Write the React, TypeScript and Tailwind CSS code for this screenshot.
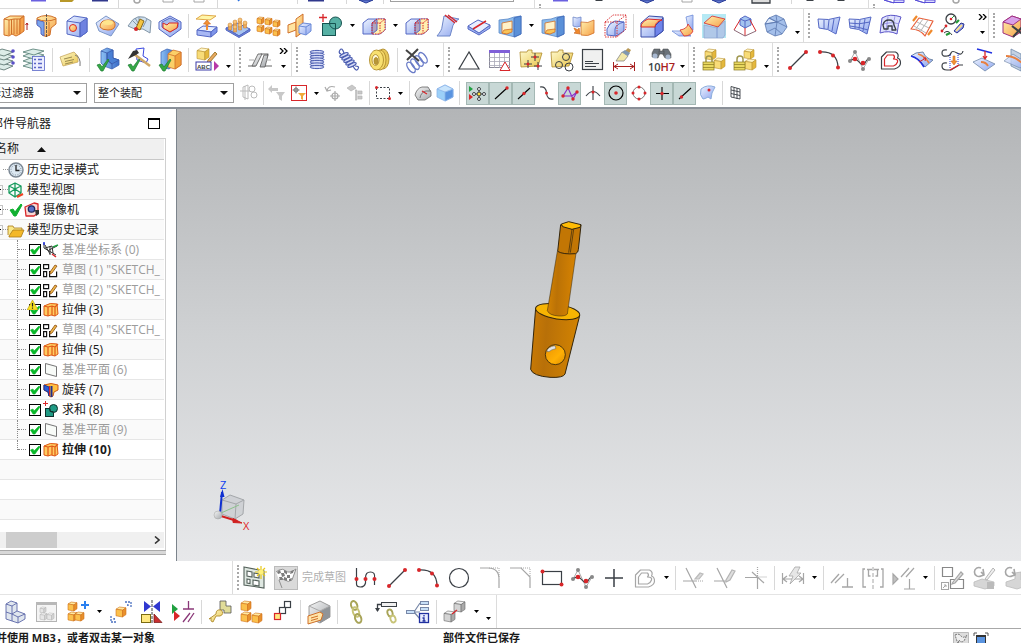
import type { ReactNode } from "react";

// ---- 图形小零件 ----

const BL = "#5468c4";
const OR = "#d0702a";
const GD = "#b08c2c";
const DK = "#3a3f45";
const GR = "#a6a6a6";
const RD = "#d8262a";

function Cube({ x, y, s, tone = "y" }: { x: number; y: number; s: number; tone?: "y" | "o" | "b" | "g" | "w" }) {
  const [top, front, side, line] = {
    y: ["#fff6c8", "#f8dc78", "#e4b83c", "#b8902c"],
    o: ["#ffe9a0", "#fbc04c", "#e8902c", "#d07018"],
    b: ["#e3ecff", "#9db8f2", "#6d86d8", BL],
    g: ["#f2f2f2", "#d4d4d4", "#aaaaaa", "#666666"],
    w: ["#fafafa", "#e6e6e6", "#d4d4d4", "#b8b8b8"],
  }[tone];
  const p = (a: number, b: number) => `${x + a * s},${y + b * s}`;
  return (
    <g stroke={line} strokeWidth={0.6} strokeLinejoin="round">
      <polygon fill={top} points={[p(0, 0.22), p(0.35, 0), p(1, 0.08), p(0.65, 0.32)].join(" ")} />
      <polygon fill={front} points={[p(0, 0.22), p(0.65, 0.32), p(0.65, 1), p(0, 0.88)].join(" ")} />
      <polygon fill={side} points={[p(0.65, 0.32), p(1, 0.08), p(1, 0.76), p(0.65, 1)].join(" ")} />
    </g>
  );
}

function Dots({ at, r = 2, c = RD }: { at: [number, number][]; r?: number; c?: string }) {
  return (
    <g fill={c} stroke="none">
      {at.map(([x, y]) => (
        <circle key={`${x},${y}`} cx={x} cy={y} r={r} />
      ))}
    </g>
  );
}

function Defs() {
  return (
    <svg width="0" height="0" className="absolute" aria-hidden="true">
      <defs>
        <linearGradient id="gb" x1="0" y1="0" x2="1" y2="1">
          <stop offset="0" stopColor="#eef4ff" />
          <stop offset="1" stopColor="#8ca4ee" />
        </linearGradient>
        <linearGradient id="gd" x1="0" y1="0" x2="1" y2="0">
          <stop offset="0" stopColor="#8cc0f4" />
          <stop offset="1" stopColor="#3a6cc8" />
        </linearGradient>
        <linearGradient id="go" x1="0" y1="0" x2="1" y2="1">
          <stop offset="0" stopColor="#fff2b0" />
          <stop offset="1" stopColor="#f6a048" />
        </linearGradient>
        <linearGradient id="gy" x1="0" y1="0" x2="1" y2="1">
          <stop offset="0" stopColor="#fffbd0" />
          <stop offset="1" stopColor="#e8c44c" />
        </linearGradient>
        <linearGradient id="gg" x1="0" y1="0" x2="1" y2="1">
          <stop offset="0" stopColor="#f6f6f6" />
          <stop offset="1" stopColor="#a4a8ac" />
        </linearGradient>
        <linearGradient id="body" x1="0" y1="0" x2="1" y2="0.1">
          <stop offset="0" stopColor="#cc7c04" />
          <stop offset="0.35" stopColor="#b87008" />
          <stop offset="1" stopColor="#d28302" />
        </linearGradient>
        <linearGradient id="shaft" x1="0" y1="0" x2="1" y2="0.1">
          <stop offset="0" stopColor="#d98702" />
          <stop offset="0.4" stopColor="#bb7206" />
          <stop offset="1" stopColor="#d68302" />
        </linearGradient>
        <linearGradient id="hole" x1="0" y1="0" x2="1" y2="1">
          <stop offset="0" stopColor="#e99204" />
          <stop offset="0.6" stopColor="#ffb005" />
          <stop offset="1" stopColor="#e08d00" />
        </linearGradient>
      </defs>
    </svg>
  );
}

const greenCheck = <path d="M1 17l3-1 2 3 6-8 1 1-6 11H5z" fill="#35a845" stroke="#1c7d33" strokeWidth=".7" />;

const lockBody = (
  <g stroke="#8a7a20" strokeWidth=".7">
    <path d="M4 14v-3a3 3 0 016 0v3" fill="none" stroke="#a09850" strokeWidth="1.500" />
    <rect x="1" y="14" width="11" height="8" fill="#e8d860" />
    <path d="M1 16.500h11M1 19.500h11" />
  </g>
);

// 24x24 大图标
const ICONS: Record<string, ReactNode> = {
  extrude: (
    <g stroke={OR} strokeLinejoin="round">
      <path d="M1 5l6-3h14l-4 3v15l-4 2-4-2-3 2-5-1z" fill="url(#go)" />
      <path d="M17 5l4-3v15l-4 3z" fill="#f6a048" />
      <path d="M1 5l5 1 5-1 6 0M6 6v15M11 5v15M8.500 6v14M14 5v15" fill="none" />
      <path d="M24 9v7M22.500 11l1.500-2 1 2" stroke="#b02020" fill="none" />
    </g>
  ),
  revolve: (
    <g strokeLinejoin="round">
      <path d="M3 4q9-5 19 0l0 6-5 4-1 7q-4 3-8 0l-1-7-4-4z" fill="url(#go)" stroke={OR} />
      <path d="M3 6l7 2v14l-3-2v-6l-4-3z" fill="#7aa4ec" stroke={BL} />
      <path d="M3 5q9 4 19 0M15 8v14" fill="none" stroke={OR} />
      <path d="M12.500 0v24" stroke={DK} strokeWidth=".8" strokeDasharray="3 1" />
    </g>
  ),
  hole: (
    <g stroke={BL} strokeLinejoin="round">
      <path d="M2 7l7-5 13 2v14l-7 5-13-3z" fill="url(#gb)" />
      <path d="M15 9l7-5v14l-7 5z" fill="#6f82e0" />
      <path d="M2 7l13 2v14" fill="none" />
      <circle cx="8" cy="14" r="3.500" fill="url(#go)" stroke={RD} />
    </g>
  ),
  emboss: (
    <g strokeLinejoin="round">
      <path d="M0 9L10 2l13 8-8 12L3 17z" fill="url(#gb)" stroke="#7d98c8" />
      <path d="M4 13q0-7 8-7t7 6q-1 4-7 4t-8-3z" fill="url(#go)" stroke={OR} />
      <ellipse cx="12" cy="8.500" rx="5" ry="2.500" fill="#ffe58c" />
    </g>
  ),
  tape: (
    <g strokeLinejoin="round">
      <path d="M1 12Q10-4 24 7l-1 12-7-4-3 0-3 1-9-4z" fill="#d0e0ee" stroke="#8396a8" />
      <path d="M5 6l6 6M12 3v8M20 5l-4 8M8 4l5 8" stroke="#8396a8" fill="none" />
      <path d="M9 14l4-9 4 2-4 9z" fill="#f5c542" stroke="#8a6a18" />
      <circle cx="9" cy="15" r="2" fill={RD} />
    </g>
  ),
  pocket: (
    <g strokeLinejoin="round">
      <path d="M1 8l11-6 11 6v7l-11 8L1 15z" fill="url(#gb)" stroke={BL} />
      <path d="M4 8l8-4 8 4v5l-8 5-8-5z" fill="#a8bcec" stroke={BL} />
      <path d="M5 9l4 2 2-2 9 0-1 5-7 4-7-4z" fill="url(#go)" stroke={RD} />
    </g>
  ),
  offsetFace: (
    <g strokeLinejoin="round">
      <path d="M1 5l6-4 14 1-6 4z" fill="#fff6a8" stroke="#e0a848" />
      <path d="M11 16V10H8.500l3.500-4 3.500 4H13v6" fill="#f39030" stroke={OR} strokeWidth=".7" />
      <path d="M2 16l6-4 14 1-6 5z" fill="#e6eeff" stroke={BL} />
      <path d="M2 16l14 2v5L2 21z" fill="#a8b8f4" stroke={BL} />
      <path d="M16 18l6-5v5l-6 5z" fill="#7f95ea" stroke={BL} />
      <path d="M12 16v-4" stroke="#f39030" strokeWidth="2" />
    </g>
  ),
  pattern: (
    <g strokeLinejoin="round">
      <path d="M0 14l11-5 13 6-11 7z" fill="#a8c4f0" stroke={BL} />
      <path d="M0 14v2l13 7.500 11-6.500v-2l-11 7z" fill="#6d86d8" stroke={BL} />
      {[[4, 11], [9, 8], [14, 6], [9, 13], [14, 11], [19, 9]].map(([x, y]) => (
        <g key={x * 20 + y} stroke="#c07a2c" strokeWidth=".5" fill="#f2ae5c">
          <rect x={x - 1.5} y={y} width="3" height="5" />
          <circle cx={x} cy={y} r="2" fill="#f8c478" />
        </g>
      ))}
    </g>
  ),
  patternGeom: (
    <g>
      <Cube x={0} y={3} s={7} tone="o" />
      <Cube x={8} y={4} s={7} tone="o" />
      <Cube x={16} y={6} s={7} tone="o" />
      <Cube x={0} y={11} s={7} tone="o" />
      <Cube x={8} y={13} s={7} tone="o" />
      <Cube x={16} y={15} s={7} tone="o" />
    </g>
  ),
  mirror: (
    <g strokeLinejoin="round">
      <path d="M0 11l8-3v8l-8 3z" fill="#ffe4a0" stroke={OR} />
      <path d="M8 5l7-5v18l-7 5z" fill="url(#go)" stroke={OR} />
      <path d="M11 12l4-3 8 1v7l-5 4-7-2z" fill="url(#gb)" stroke="#6d8cd8" />
      <path d="M11 12l7 1 5-3M18 13v8" fill="none" stroke="#6d8cd8" />
    </g>
  ),
  unite: (
    <g stroke="#15524f">
      <rect x="3.500" y="9.500" width="13" height="12" fill="#56b0a4" />
      <circle cx="16.500" cy="9" r="6" fill="#56b0a4" />
      <path d="M10 9.500h6.500V15" fill="none" />
      <path d="M0 3.500h8M4 0v8" stroke={RD} strokeWidth="1.300" />
    </g>
  ),
  trim: (
    <g strokeLinejoin="round">
      <path d="M1 9l5-4h17v11l-5 4H1z" fill="url(#gb)" stroke={BL} />
      <path d="M10 9l5-4h8v11l-5 4h-8z" fill="#fff0b0" stroke="none" />
      <path d="M10 9l5-4v11l-5 4z" fill="#b0a4c0" stroke={BL} />
      <path d="M10 9h8v11h-8zM10 9l5-4h8l-5 4M23 5v11l-5 4" fill="none" stroke={RD} strokeDasharray="1.500 1" />
    </g>
  ),
  trimSheet: (
    <g strokeLinejoin="round">
      <path d="M8 2l15 3q-6 3-7 10l-2 7H1q5-6 5-9z" fill="url(#gb)" stroke="#6d86c8" />
      <path d="M9 1l10 8M12 1l9 7" stroke={RD} strokeWidth="1.300" />
    </g>
  ),
  divide: (
    <g strokeLinejoin="round">
      <path d="M1 12v3l11 6 11-7v-3l-11 8z" fill="#9cb0f0" stroke={BL} />
      <path d="M1 12l10-6 12 5-11 8z" fill="#e8eeff" stroke={BL} />
      <path d="M6 15l13-8" stroke={RD} strokeWidth="1.500" />
    </g>
  ),
  shell: (
    <g strokeLinejoin="round" strokeWidth=".8">
      <path d="M1 6l9-1 6-2 7-1v18l-6 3-16-4z" fill="#8cbcec" stroke="#5a88c8" />
      <path d="M4 9l10-2v9l-5 4-5-1z" fill="#fff2c8" stroke={OR} />
      <path d="M6 16l8-1v3l-5 2-5-1z" fill="#f8c458" stroke={OR} />
      <path d="M16 4l7-2v18l-7 3z" fill="#5a90d8" stroke="#4068b8" />
    </g>
  ),
  replace: (
    <g strokeLinejoin="round" strokeWidth=".8">
      <path d="M1 3q4 2 8 0v9q-4 2-8 0z" fill="url(#gb)" stroke="#6d86c8" />
      <path d="M9 8q7 2 13-2v13q-6 4-13 2z" fill="url(#go)" stroke={OR} />
      <path d="M2 14l4 2 1-2 1 6-6-1 2-1z" fill="#f08a2c" stroke={OR} />
    </g>
  ),
  offsetBody: (
    <g strokeLinejoin="round">
      <path d="M4 21v-6q2-6 8-8l9 1v9l-8 5z" fill="url(#gb)" stroke={BL} />
      <path d="M12 22v-7q1-5 9-7" fill="none" stroke={BL} />
      <path d="M2 8h12v15H2zM2 8l8-7h13v14l-9 8M14 8l9-7" fill="none" stroke={RD} strokeWidth=".9" strokeDasharray="1.500 1" />
    </g>
  ),
  blend: (
    <g strokeLinejoin="round">
      <path d="M1 9l8-7 14 1v14l-8 6H1z" fill="url(#gb)" stroke="#3a4da8" />
      <path d="M15 12l8-8v13l-8 6z" fill="#6f84ea" stroke="#3a4da8" />
      <path d="M1 13q0-5 7-8l14 1q-7 2-7 7z" fill="url(#go)" stroke={RD} />
    </g>
  ),
  faceBlend: (
    <g strokeLinejoin="round" strokeWidth=".8">
      <path d="M15 3l7-2v15l-5-3z" fill="url(#gb)" stroke="#6d8cd8" />
      <path d="M1 17h12l7 5H8z" fill="url(#gb)" stroke="#6d8cd8" />
      <path d="M9 16q7-1 8-6l5 7q-2 5-9 5z" fill="url(#go)" stroke={RD} />
    </g>
  ),
  chamfer: (
    <g strokeLinejoin="round">
      <rect x="0" y="0" width="24" height="24" fill="#b5e9f4" />
      <path d="M2 11l13 3 8-7v14l-2 3H2z" fill="#b0c8e8" stroke="#90a8d0" strokeWidth=".8" />
      <path d="M2 9l8-7 13 3-7 8z" fill="url(#go)" stroke={RD} strokeWidth=".8" />
      <path d="M15 13v11" stroke="#7f98d0" />
    </g>
  ),
  draft: (
    <g strokeLinejoin="round">
      <path d="M7 5l5-3 6 3v6l-6 3-5-3z" fill="#a4c4f0" stroke={BL} />
      <path d="M7 5l5 2 6-2M12 7v7" stroke={BL} fill="none" />
      <path d="M1 16L7 6M23 17l-6-11M12 22V14" stroke={RD} />
      <path d="M1 16l11 6 11-5" fill="none" stroke="#8d6a78" />
    </g>
  ),
  facet: (
    <g stroke="#5c78b0" strokeWidth=".8" strokeLinejoin="round">
      <path d="M12 1l8 4 3 8-5 7-7 2-8-4-2-8 4-6z" fill="#a4bfea" />
      <path d="M5 4l8 4-12 2z" fill="#dce8fb" />
      <path d="M5 4l8 4 7-3M1 10l12-2 10 5M13 8l-2 14M3 18l8-4 7 6M12 1l1 7" fill="none" />
    </g>
  ),
  ruled: (
    <g stroke={BL} strokeLinejoin="round">
      <path d="M1 5q10 2 22-2l-4 17Q11 14 2 14z" fill="url(#gb)" />
      <path d="M7 6v9M12 6l-1 9M17 5l-2 12" fill="none" />
    </g>
  ),
  mesh: (
    <g stroke={BL} strokeLinejoin="round">
      <path d="M1 5q10 2 22-2l-4 17Q11 14 2 14z" fill="url(#gb)" />
      <path d="M7 6v9M12 6l-1 9M17 5l-2 12M1 9q10 2 21-1M2 12q9 1 18 4" fill="none" />
    </g>
  ),
  sweep: (
    <g strokeLinejoin="round">
      <path d="M3 4q8-5 19-1-3 6-4 17Q10 16 1 19z" fill="#dfe2fc" stroke="#5b55c8" />
      <path d="M9 3L7 17M16 2l-3 15M2 11q10-4 18-1" fill="none" stroke="#8a84e0" strokeWidth=".8" />
      <path d="M5 15l-1-4q1-5 6-5t5 5l2 5h-4v-4H9v3z" fill="none" stroke={DK} strokeWidth="1.300" />
    </g>
  ),
  swept: (
    <g fill="none" strokeLinejoin="round">
      <path d="M9 4l14 3-8 15Q10 15 1 15z" fill="#fff" stroke="#e8603a" strokeWidth="1.200" />
      <path d="M13 5L5 16M18 6l-8 12M7 8l12 6M4 12l12 7" stroke="#b5b5b5" />
      <path d="M3 7l4-5M18 21l4-5" stroke="#f08a2c" strokeWidth="2.200" />
    </g>
  ),
  curveTool: (
    <g fill="none">
      <circle cx="10" cy="5" r="5" stroke={DK} strokeWidth="1.300" />
      <path d="M10 5l3-3" stroke="#249a38" />
      <circle cx="10" cy="5" r="1.300" fill={RD} />
      <path d="M1 17l4-5M3 19q4-4 8 2" stroke={DK} />
      <Dots at={[[1, 17], [5, 12]]} r={1.400} />
      <path d="M5 21l4-2M15 9l3-3" stroke="#249a38" strokeWidth="2.200" />
      <path d="M13 17l7-8 3 1-1 4-6 5z" fill="#8f9cf0" stroke="#2a3490" />
      <path d="M15 17l6-6" stroke="#ffe08a" strokeWidth="1.800" />
    </g>
  ),
  deleteBody: (
    <g strokeLinejoin="round">
      <path d="M1 8l9-6 9 3v13l-8 5-10-4z" fill="url(#go)" stroke="#a03080" />
      <path d="M1 8l9-6 9 3-8 6z" fill="#d9a0e8" stroke="#a03080" />
      <path d="M10 12l13 10M22 11L11 23" stroke={DK} strokeWidth="2" />
    </g>
  ),

  // 第二行
  layers: (
    <g stroke="#4f6b66" strokeWidth=".8" fill="#dcece8">
      <path d="M2 19l9-4 11 3-9 4z" />
      <path d="M2 14l9-4 11 3-9 4z" />
      <path d="M2 9l9-4 11 3-9 4z" />
      <path d="M2 5l9-4 11 3-9 4z" />
      <Dots at={[[22, 3], [22, 9], [22, 15]]} r={1.800} c="#5a50c8" />
    </g>
  ),
  layerSet: (
    <g stroke="#4f7a70" strokeWidth=".8" fill="#dcece8">
      <path d="M1 18l10-4 11 3-10 4z" />
      <path d="M1 13l10-4 11 3-10 4z" />
      <path d="M1 8l10-4 11 3-10 4z" />
      <path d="M1 4l10-3 11 2-10 4z" />
      <rect x="10.500" y="8.500" width="12" height="14" fill="#eceeff" stroke="#5a66c8" />
      <path d="M12 11.500h2M12 15.500h2M12 19.500h2M16 11.500h4M16 15.500h4M16 19.500h4" stroke="#5a66c8" strokeWidth="1.500" />
    </g>
  ),
  tag: (
    <g strokeLinejoin="round">
      <path d="M1 9l14-5 4 4 0 6-15 4z" fill="url(#gy)" stroke="#c8a860" strokeWidth=".8" />
      <path d="M5 11l8-2M6 13.500l9-2M6 16l8-2" stroke="#9a8a50" fill="none" />
      <path d="M16 7q6 2 5 11" fill="none" stroke="#777" />
    </g>
  ),
  wave1: (
    <g strokeLinejoin="round" strokeWidth=".8">
      <path d="M5 3l6-3 6 2v8l6 2v5l-7 4-8-3-3-3z" fill="url(#gd)" stroke="#4068b8" />
      <path d="M11 5l6-3v8l6 2-7 4-5-4z" fill="#4a80d4" stroke="#3a58a8" />
      <path d="M5 3l6 2v7l5 4v5" fill="none" stroke="#3a58a8" />
      {greenCheck}
    </g>
  ),
  wave2: (
    <g strokeLinejoin="round">
      <path d="M9 1l8-1-1 8 5 3-2 4-9-3z" fill="#fff" stroke="#3a48e0" />
      <path d="M7 6l16 12" stroke="#d0a868" strokeWidth="2.500" />
      <path d="M1 11l5-8 4-1 2 3-5 3z" fill="#333" />
      {greenCheck}
    </g>
  ),
  wave3: (
    <g strokeLinejoin="round" strokeWidth=".8">
      <path d="M3 4l6-3 7 2v14l-5 4-8-2z" fill="url(#gd)" stroke="#4068b8" />
      <path d="M10 6l5-4 8 2v13l-6 4-7-2z" fill="#fbd068" stroke={OR} />
      <path d="M17 8l6-4v13l-6 4z" fill="#f0a03c" stroke={OR} />
      <path d="M10 6l7 2" fill="none" stroke={OR} />
      {greenCheck}
    </g>
  ),
  annotate: (
    <g>
      <Cube x={2} y={0} s={12} />
      <path d="M13 12l7-8 2 2-7 8-3 1z" fill="#e8a860" stroke="#8a6a18" strokeWidth=".8" />
      <rect x="1" y="14" width="15" height="8" fill="#fff" stroke="#3a3aa8" />
      <text x="2" y="21" fontSize="6" fontWeight="700" fontFamily="Liberation Sans, sans-serif" fill={DK}>ABC</text>
      <path d="M19 13l5 5-5 5z" fill="#b838a8" />
    </g>
  ),
  straighten: (
    <g strokeLinejoin="round">
      <path d="M0 18h7l6-12h7l-4 12h8" fill="none" stroke="#666" strokeWidth="1.200" />
      <path d="M4 18l6-12h4l-6 12zM12 19l4-12h4l-3 12z" fill="url(#gg)" stroke="#555" strokeWidth=".8" />
      <path d="M1 12h5M18 12h5" stroke="#aaa" fill="none" />
    </g>
  ),
  springV: (
    <g fill="none" stroke="#4a5cb0">
      {[4, 6.5, 9, 11.5, 14, 16.5, 19].map((y) => (
        <ellipse key={y} cx="12" cy={y} rx="7" ry="1.600" fill="#d4daf6" />
      ))}
    </g>
  ),
  springT: (
    <g fill="none" stroke="#4a5cb0" strokeWidth="1.200">
      <path d="M8 5Q6-1 4 2t1 4M17 18q3 6 5 3t-3-3" />
      {[[8, 6], [10, 8.5], [12, 11], [14, 13.5], [16, 16]].map(([x, y]) => (
        <ellipse key={x} cx={x} cy={y + 1} rx="4.500" ry="1.500" transform={`rotate(-25 ${x} ${y + 1})`} fill="#d4daf6" />
      ))}
    </g>
  ),
  springD: (
    <g stroke={GD} strokeWidth=".9">
      <ellipse cx="16" cy="11" rx="6" ry="10" fill="#e8c858" />
      <ellipse cx="13" cy="12" rx="6" ry="10" fill="#f4d868" />
      <ellipse cx="9.500" cy="12" rx="7" ry="10" fill="#f8e070" />
      <ellipse cx="8.500" cy="12" rx="3.500" ry="5.500" fill="#fff8d8" />
      <ellipse cx="9" cy="13" rx="2" ry="3.500" fill="#b89838" />
    </g>
  ),
  springX: (
    <g fill="none">
      {[7, 11, 15, 19].map((x) => (
        <ellipse key={x} cx={x} cy={25 - x * 0.8} rx="3" ry="6" stroke="#6a7cc8" strokeWidth="1.400" transform={`rotate(-35 ${x} ${25 - x * 0.8})`} />
      ))}
      <path d="M2 2l13 11M14 1L3 12" stroke="#444" strokeWidth="2" />
    </g>
  ),
  triangle: <path d="M12 4L2 21h20z" fill="none" stroke={DK} strokeWidth="1.200" />,
  sheet: (
    <g>
      <rect x="1.500" y="2.500" width="20" height="17" fill="#fff" stroke="#8a8a9a" />
      <path d="M1 9.500h21M1 13.500h21M1 17.500h21M6.500 5v15M11.500 5v15M16.500 5v15" stroke="#a8a8b8" strokeWidth=".8" />
      <rect x="1" y="2" width="21" height="3" fill="#8060d8" />
      <path d="M17 14l-5 8.500h10z" fill="#fff" stroke={RD} />
    </g>
  ),
  folderPts: (
    <g>
      <path d="M1 4h7l1-2h4v3h10l-4 13-17 1z" fill="url(#gy)" stroke={GD} strokeWidth=".8" />
      <path d="M12 9h8M16 5v8M5 16h8M9 12v8M15 18h8M19 14v8" stroke={DK} />
      <Dots at={[[16, 9], [9, 16], [19, 18]]} r={1.500} />
    </g>
  ),
  folderCirc: (
    <g>
      <path d="M1 4h7l1-2h4v3h10l-4 13-17 1z" fill="url(#gy)" stroke={GD} strokeWidth=".8" />
      <g fill="none" stroke={DK}>
        <circle cx="16" cy="9" r="3.500" />
        <circle cx="9" cy="17" r="3.500" />
        <circle cx="19" cy="19" r="4" />
      </g>
    </g>
  ),
  note: (
    <g stroke={DK}>
      <rect x="1.500" y="1.500" width="20" height="20" fill="#f0f0f0" strokeWidth="1.200" />
      <path d="M4 13.500h8M4 15.500h14M4 18.500h11" fill="none" />
    </g>
  ),
  paintDim: (
    <g>
      <path d="M16 0l3 2-3 5-4-3z" fill="#b89858" />
      <path d="M10 4l6 4-4 5-8 0z" fill="#f2e8a8" stroke="#888" strokeWidth=".8" />
      <path d="M10 4l3-2 5 3-2 3z" fill="#8098b0" />
      <path d="M1.500 14v9M22.500 14v9M2 18.500h20M6 16l-4 2.500L6 21M18 16l4 2.500-4 2.500" fill="none" stroke="#a82020" />
    </g>
  ),
  fit: (
    <g>
      <g fill="#6a727a" stroke="#444" strokeWidth=".5">
        <path d="M5 1h6v4l-2 5-6-1V5zM14 1h5l3 5v4h-6l-3-5z" />
        <rect x="10" y="3" width="5" height="3" />
      </g>
      <circle cx="6" cy="8" r="2.500" fill="#a8b8d0" />
      <circle cx="19" cy="9" r="2.500" fill="#a8b8d0" />
      <text x="-1" y="23" fontSize="11" fontFamily="Open Sans, sans-serif" fontWeight="600" fill={DK}>
        10<tspan fill="#a82020">H7</tspan>
      </text>
    </g>
  ),
  lock1: (
    <g>
      <Cube x={3} y={1} s={11} />
      <Cube x={12} y={10} s={11} />
      {lockBody}
    </g>
  ),
  lock2: (
    <g>
      <Cube x={11} y={1} s={10} />
      <Cube x={12} y={11} s={11} />
      {lockBody}
    </g>
  ),
  line: (
    <g>
      <path d="M4 20L20 4" stroke={DK} strokeWidth="1.200" />
      <Dots at={[[4, 20], [20, 4]]} />
    </g>
  ),
  arc: (
    <g fill="none">
      <path d="M3 4q18-1 18 16" stroke={DK} strokeWidth="1.200" />
      <Dots at={[[3, 4], [16, 7.5], [21, 19.5]]} />
    </g>
  ),
  spline: (
    <g fill="none">
      <path d="M2 13l5-9 8 17 6-10" stroke="#aaa" />
      <path d="M2 13q5-4 9 1t6 1 4-4" stroke={DK} strokeWidth="1.200" />
      <Dots at={[[2, 13], [7, 4], [15, 21], [21, 11]]} r={2} c="#888" />
      <Dots at={[[7, 11], [15, 15]]} r={2.300} />
    </g>
  ),
  offsetCurve: (
    <g fill="none" strokeLinejoin="round">
      <path d="M2.500 21V9l5-5h9q4 2 2 6 3 1 3 5t-6 6z" stroke={DK} strokeWidth="1.200" />
      <path d="M5.500 18v-7l3-4h6q2 2 0 4 5 0 4 3t-4 4z" stroke={RD} strokeWidth="1.200" />
    </g>
  ),
  curveFace: (
    <g strokeLinejoin="round">
      <path d="M1 8q4-4 12-4 3 7 10 8l-8 7Q9 10 1 8z" fill="url(#gb)" stroke="#7088a8" />
      <path d="M1 8q8 2 13 11" stroke="#2030e0" strokeWidth="1.600" fill="none" />
      <path d="M8 6q7 2 11 9" stroke="#e88040" strokeWidth="1.600" fill="none" />
      <path d="M9 14l7-4M13 10l3 0-1 3" stroke={RD} fill="none" />
    </g>
  ),
  bridge: (
    <g fill="none">
      <path d="M6 2q-5-1-5 3t5 3q3 0 4-3t6 0 6-2M6 15q-5-1-5 3t5 4h4l8-5h4" stroke={DK} strokeWidth="1.200" />
      <path d="M9 7v14M17 5v12" stroke="#2030e0" strokeDasharray="1 1" />
      <path d="M12 8h2v5h2l-3 4-3-4h2z" fill="#f39030" stroke={OR} strokeWidth=".6" />
      <path d="M9 22l9-5" stroke={RD} strokeWidth="1.300" />
    </g>
  ),
  project: (
    <g strokeLinejoin="round">
      <path d="M1 14l9-4 13 6-10 7z" fill="url(#gb)" stroke="#7088a8" strokeWidth=".8" />
      <path d="M9 14q5 0 7 4" stroke="#e88040" strokeWidth="1.800" fill="none" />
      <path d="M5 1l15 4" stroke="#2030e0" strokeWidth="1.400" />
      <path d="M13 3v8M11 8l2 3 2-3" stroke={RD} strokeWidth="1.300" fill="none" />
    </g>
  ),
  intersect: (
    <g strokeLinejoin="round" strokeWidth=".8">
      <path d="M8 1l10 5v17L8 18z" fill="#c4d2e4" stroke="#7088a8" />
      <path d="M1 13l9-7 14 9-7 5z" fill="url(#gb)" stroke="#7088a8" opacity=".8" />
      <path d="M3 8q9 0 17 8" stroke="#e88040" strokeWidth="1.800" fill="none" />
    </g>
  ),

  // 草图工具条
  sketch: (
    <g fill="none" stroke="#53605a" strokeWidth="1.100">
      <path d="M1 1l20 4v17L1 19z" fill="#dfe8e2" />
      <path d="M4 5l5 1v5l-5-1zM4 13l3 .5v4L4 17zM10 14l6 1v5l-6-1zM11 7l5 1v4l-5-1z" fill="#fff" />
      <path d="M18 0v13M12 6h12M14 2l8 8M22 2l-8 8" stroke="#e8c818" strokeWidth="1.200" />
      <circle cx="18" cy="6" r="2.500" fill="#fff27a" stroke="none" />
    </g>
  ),
  flag: (
    <g>
      <path d="M2 6l3-2q4-2 7 1t10-2l-4 11q-4 3-7 0t-6 0l3 8" fill="#fff" stroke="#909090" />
      <g fill="#7c7c7c">
        <path d="M3 6l3-2 1 3-3 1zM10 4l3 1.500 0 3-3-2zM17 5l3-1-1 3-3 1zM7 7l3 0 1 3-3 1zM13 9l3 0 0 3-3 0zM5 11l3 0 1 3-3 0zM10 11l3 1 0 3-3-1zM15 13l3-1-1 3-2 0z" />
      </g>
    </g>
  ),
  profile: (
    <g fill="none">
      <path d="M2.500 2v16q0 3 4 3t5-4v-5q0-6 5-6t4 6v7" stroke={DK} strokeWidth="1.200" />
      <Dots at={[[2.5, 13], [11.5, 13], [20.5, 13]]} />
    </g>
  ),
  circle: <circle cx="12" cy="12" r="9.500" fill="none" stroke={DK} strokeWidth="1.200" />,
  fillet: (
    <g fill="none" stroke={GR}>
      <path d="M2 2h8q11 0 11 11v9" strokeWidth="1.200" />
      <path d="M11 2h10v9" strokeDasharray="1 1" />
    </g>
  ),
  chamferLine: (
    <g fill="none" stroke={GR}>
      <path d="M1 2h11l9 9v11" strokeWidth="1.200" />
      <path d="M12 2h9v9" strokeDasharray="1 1" />
    </g>
  ),
  rect: (
    <g>
      <rect x="2.500" y="5.500" width="19" height="13" fill="none" stroke={DK} strokeWidth="1.200" />
      <Dots at={[[2.5, 5.5], [21.5, 18.5]]} />
    </g>
  ),
  plus: <path d="M12 3v18M3 12h18" stroke={DK} strokeWidth="1.500" />,
  offsetGray: (
    <g fill="none" strokeLinejoin="round" stroke={GR} strokeWidth="1.200">
      <path d="M2.500 21V9l5-5h9q4 2 2 6 3 1 3 5t-6 6z" />
      <path d="M5.500 18v-7l3-4h6q2 2 0 4 5 0 4 3t-4 4z" />
    </g>
  ),
  quickTrim: (
    <g fill="none" stroke={GR} strokeWidth="1.200">
      <path d="M1 15h13M4 2l10 20" />
      <path d="M14 15h8" strokeDasharray="1 1" />
      <path d="M13 13l5-6 3 1-4 5z" fill="#d8d8d8" stroke="#bbb" />
    </g>
  ),
  quickExtend: (
    <g fill="none" stroke={GR} strokeWidth="1.200">
      <path d="M1 15h12M4 2l10 20" />
      <path d="M13 14l6-10 3 1-5 9-4 2z" fill="#dedede" stroke="#b4b4b4" />
    </g>
  ),
  corner: (
    <g fill="none" stroke={GR} strokeWidth="1.200">
      <path d="M1 11.500h12.500V23M8 6l12 11" />
      <path d="M13.500 1v10h9" strokeDasharray="1 1" />
    </g>
  ),
  autoDim: (
    <g fill="none" stroke={GR} strokeWidth="1.200">
      <path d="M1.500 7v11M22.500 7v11M2 13h20M6 10l-4 3 4 3M18 10l4 3-4 3" />
      <path d="M14 1h5l-3 6h4L9 18l3-8H8z" fill="#e6e6e6" strokeWidth=".8" />
    </g>
  ),
  constraint: (
    <g stroke={GR} strokeWidth="1.300">
      <path d="M1 17L9 8M5 17l9-9M17.500 12v9M12 21h11" />
    </g>
  ),
  symmetric: (
    <g fill="none" stroke={GR} strokeWidth="1.300">
      <path d="M4 3H2v18h3M20 3h2v18h-3M7.500 3v7h2M16.500 3v7h-2" />
      <path d="M12 1v22" strokeDasharray="4 2" strokeWidth="1" />
      <path d="M6 3.500h5M18 3.500h-5" />
    </g>
  ),
  showCons: (
    <g stroke={GR} strokeWidth="1.200">
      <path d="M1 8l5 5-5 5z" fill="#c0c0c0" />
      <path d="M9 11l8-9M14 11l8-9M17.500 13v10M12 23h11" />
    </g>
  ),
  orient: (
    <g fill="none" stroke="#888" strokeWidth="1.200">
      <path d="M1.500 1.500h10v9h-10zM9.500 13.500h13v9h-13z" />
      <rect x="0.500" y="16.500" width="7" height="7" strokeWidth="1" stroke={GR} />
      <path d="M2 22l3-3M3 19h2v2" strokeWidth="1" stroke={GR} />
      <path d="M12 16l8-10 2 2-8 9-3 1z" fill="#ddd" stroke={GR} />
    </g>
  ),
  reattach: (
    <g strokeLinejoin="round" strokeWidth=".8">
      <path d="M2 16l8-3 12 3v4l-9 3-11-3z" fill="#d6d6d6" stroke="#bbb" />
      <path d="M9 2a4.500 4.500 0 100 8l3-1M9 6l3 3-1-6" fill="none" stroke={GR} strokeWidth="1.600" />
      <path d="M13 13l8-11 2 2-8 10z" fill="#eee" stroke={GR} />
      <rect x="15" y="16" width="7" height="7" fill="#bbb" />
    </g>
  ),
  update: (
    <g strokeLinejoin="round" strokeWidth=".8">
      <path d="M3 16l9-3V7l6-1v8l5 2v4l-9 3-11-3z" fill="#d6d6d6" stroke="#bbb" />
      <path d="M9 2a4.500 4.500 0 100 8l3-1M9 6l3 3-1-6" fill="none" stroke={GR} strokeWidth="1.600" />
    </g>
  ),

  // 装配工具条
  asmBlue: (
    <g strokeLinejoin="round" fill="#e0e6ee" stroke="#5c68a8" strokeWidth=".9">
      <path d="M2 4l5-3 6 2v8l8 3v5l-7 4-12-4z" />
      <path d="M2 4l6 2 5-3M8 6v15M2 12l6 2 5-3M8 14l6 3 7-3M14 17v6" fill="none" />
    </g>
  ),
  asmFrame: (
    <g>
      <rect x="1.500" y="2.500" width="20" height="19" fill="#f4f4f4" stroke="#b4b4b4" />
      <rect x="1" y="2" width="21" height="3" fill="#b8b8b8" />
      <Cube x={5} y={7} s={6} tone="w" />
      <Cube x={5} y={13} s={7} tone="w" />
      <Cube x={12} y={13} s={7} tone="w" />
    </g>
  ),
  addPart: (
    <g>
      <Cube x={2} y={2} s={9} tone="o" />
      <Cube x={2} y={12} s={9} tone="o" />
      <Cube x={9} y={12} s={9} tone="o" />
      <path d="M19 1v8M15 5h8" stroke="#2a80f0" strokeWidth="2" />
    </g>
  ),
  movePart: (
    <g fill="none">
      <Cube x={7} y={7} s={10} tone="o" />
      <path d="M16 2h6v6M18 5h1v2M2 16v6h6M5 18v1h2" stroke="#4a70c0" strokeDasharray="2 1" strokeWidth="1.300" />
    </g>
  ),
  mirrorAsm: (
    <g>
      <path d="M4 1l7 5.500L4 12zM20 1l-7 5.500 7 5.500z" fill="#3038d0" />
      <path d="M12 0v24" stroke={DK} strokeDasharray="3 1" />
      <rect x="1.500" y="14.500" width="9" height="8" fill="#ffe880" stroke="#7a6a10" />
      <path d="M14 14l8 8.500h-8z" fill="#c83030" stroke="#701010" strokeWidth=".7" />
    </g>
  ),
  asmCons: (
    <g>
      <path d="M1 4l6 5-6 5z" fill="#20a040" />
      <path d="M3 11l6 5-6 5z" fill={RD} />
      <path d="M17.500 1v8M12 9h11M12 22l7-9M17 22l6-9" stroke="#8a3878" strokeWidth="1.300" />
    </g>
  ),
  wrench: (
    <g strokeLinejoin="round" stroke={GD} strokeWidth=".9">
      <path d="M12 1h6v5h5v7h-7v-3h-4z" fill="#e0dc98" stroke="#555" strokeWidth=".8" />
      <path d="M1 19l7-5q0-5 5-4 4 4-1 6l-4 0-3 6-2-1 0-3z" fill="url(#gy)" />
    </g>
  ),
  pattern3: (
    <g>
      <Cube x={2} y={1} s={10} tone="o" />
      <Cube x={2} y={12} s={10} tone="o" />
      <Cube x={13} y={13} s={10} tone="o" />
    </g>
  ),
  steps: (
    <g stroke={DK} strokeWidth="1.200">
      <rect x="14.500" y="1.500" width="6" height="6" fill="#fff" />
      <rect x="9.500" y="7.500" width="6" height="6" fill="#fff" />
      <rect x="4.500" y="13.500" width="6" height="6" fill="#ffe880" stroke={RD} />
    </g>
  ),
  box3d: (
    <g strokeLinejoin="round">
      <path d="M2 6l11-5 10 5v11l-10 6-11-5z" fill="url(#gg)" stroke="#888" strokeWidth=".8" />
      <path d="M13 11l10-5v11l-10 6z" fill="#909498" />
      <path d="M2 6l11 5 10-5" fill="none" stroke="#aaa" />
      <path d="M1 16l12-4 3 2-2 6-13 4z" fill="#ffe4a8" stroke={OR} />
      <path d="M4 18l7-2M4 20.500l7-2" stroke={OR} />
    </g>
  ),
  chain: (
    <g fill="none" strokeWidth="2" stroke="#a8a458">
      <ellipse cx="10" cy="5.500" rx="3" ry="4.500" transform="rotate(-20 10 5)" />
      <ellipse cx="12" cy="12" rx="3" ry="5" transform="rotate(-20 12 12)" stroke="#c8c478" />
      <ellipse cx="14" cy="18.500" rx="3" ry="4.500" transform="rotate(-20 14 18)" />
    </g>
  ),
  chain2: (
    <g fill="none">
      <path d="M2.500 11V4.500h4" stroke={DK} strokeWidth="1.300" />
      <rect x="6.500" y="2.500" width="15" height="4" fill="#f0f0f0" stroke={DK} />
      <path d="M0 8h5l-2.500 4z" fill={DK} />
      <ellipse cx="15" cy="13" rx="2.500" ry="3.500" transform="rotate(-20 15 13)" stroke="#a8a458" strokeWidth="1.800" />
      <ellipse cx="18" cy="19" rx="2.500" ry="3.500" transform="rotate(-20 18 19)" stroke="#c8c478" strokeWidth="1.800" />
    </g>
  ),
  infoTree: (
    <g fill="none">
      <path d="M8 12l6-9M8 12h6M8 12l6 7" stroke="#7888a8" strokeWidth="1.200" />
      <rect x="0.500" y="10.500" width="8" height="3" fill="#c8e0f8" stroke="#7888a8" />
      <rect x="14.500" y="1.500" width="8" height="3" fill="#c8e0f8" stroke="#7888a8" />
      <rect x="14.500" y="7.500" width="8" height="3" fill="#c8e0f8" stroke="#7888a8" />
      <rect x="13.500" y="13.500" width="9" height="9" fill="#e8ecff" stroke="#2030a0" strokeWidth="1.300" />
      <path d="M18 15v1.500M16.500 18H18v3M16.500 21h3" stroke="#2030a0" strokeWidth="1.300" />
    </g>
  ),
  clearance: (
    <g>
      <Cube x={11} y={1} s={11} tone="g" />
      <Cube x={1} y={11} s={11} tone="g" />
      <path d="M9 14l5-4" stroke={RD} strokeWidth="1.300" />
    </g>
  ),

  // 被裁切的第一行
  c_purple: <path d="M5 0h15v1.500H5z" fill="#6a60e0" />,
  c_olive: <path d="M3 0h14l-2 2H3z" fill="#b89828" />,
  c_navy: <path d="M4 0h16v1.500H4z" fill="#30388c" />,
  c_ring: <path d="M9 0a3 3 0 006 0" fill="none" stroke={GR} strokeWidth="1.500" />,
  c_box: <path d="M7 0v2h10V0" fill="none" stroke={GR} />,
  c_tick: <path d="M14 1l2-2" stroke="#2a70e0" strokeWidth="1.500" />,
  c_blue: <path d="M6 0l7 3 7-3z" fill="#6078d0" stroke="#2a3d98" />,
  c_dark: <path d="M8 0h8l-1 1H9z" fill={DK} />,
  c_win: <path d="M3 0v3h18V0" fill="#ddd" stroke={DK} strokeWidth="1.300" />,
  c_card: <path d="M2 0l10 3V0h10v2.500H10z" fill="#dcdcff" stroke="#5a50d8" />,
};

// 20x20 选择条图标
const SMALL: Record<string, ReactNode> = {
  s_snap: <g fill="none" stroke="#bbb"><path d="M4 4l5-2v14l-5-2zM1 8h10M6 3v14" /><circle cx="13" cy="6" r="3" /><circle cx="15" cy="12" r="3" /></g>,
  s_back: <g fill="#c8c8c8"><path d="M1 6l4-4v3h6v3H5v2zM9 9h9l-3 4v5l-3-2v-3z" /></g>,
  s_filter: (
    <g fill="none">
      <rect x="2.500" y="2.500" width="15" height="15" stroke={RD} />
      <circle cx="7" cy="7" r="2" stroke="#777" />
      <path d="M7 3.500v7M3.500 7h7" stroke="#777" />
      <path d="M9 10h8l-3 3v4l-2-1v-3z" fill="#f0a838" />
    </g>
  ),
  s_rot: <g fill="none" stroke="#aaa" strokeWidth="1.200"><path d="M4 8q1-6 8-4M2 4l2 4 4-1" /><circle cx="12" cy="13" r="3" /><path d="M12 8v10M7 13h10" /></g>,
  s_tree: <g fill="#c8c8c8" stroke="#b4b4b4" strokeWidth=".7"><path d="M2 5l5-3 4 3-5 3zM10 7h2v10h-2M13 8h4v3h-4zM13 13h4v3h-4z" /></g>,
  s_box: (
    <g fill="none">
      <rect x="3.500" y="4.500" width="13" height="11" stroke={DK} strokeDasharray="2 1.500" />
      <Dots at={[[3.5, 4.5], [16.5, 15.5]]} r={1.500} />
    </g>
  ),
  s_solid: <g stroke="#666" strokeWidth=".8"><path d="M2 12q2-7 7-8h6l3 5v4l-6 4H5z" fill="url(#gg)" /><path d="M7 15q1-6 6-7h5" fill="none" /><path d="M9 8l5 3" stroke={RD} strokeWidth="1.300" /></g>,
  s_cube: <g stroke="#8cb4e8" strokeWidth=".8"><path d="M2 6l8-4 8 4v8l-8 4-8-4z" fill="#9cd0f8" /><path d="M10 9l8-3v8l-8 4z" fill="#5a94e0" /><path d="M2 6l8 3 8-3-8-4z" fill="#c8e4fc" /></g>,
  s_view: (
    <g>
      <path d="M1 3l4 3-4 3z" fill="#20a040" />
      <path d="M1 11l4 3-4 3z" fill={RD} />
      <path d="M11 5v12M5 11h12" stroke={DK} />
      <circle cx="11" cy="11" r="2" fill="#ffe040" stroke={DK} />
      <g fill="#fff" stroke={DK}>
        <circle cx="11" cy="6" r="1.500" /><circle cx="11" cy="16" r="1.500" /><circle cx="6" cy="11" r="1.500" /><circle cx="16" cy="11" r="1.500" />
      </g>
    </g>
  ),
  s_end: <g><path d="M4 16L16 5" stroke="#000" strokeWidth="1.100" /><Dots at={[[16, 5]]} r={1.700} /></g>,
  s_mid: <g><path d="M4 16L16 5" stroke="#000" strokeWidth="1.100" /><Dots at={[[10, 10.5]]} r={1.700} /></g>,
  s_ctrl: <g fill="none"><path d="M3 4q6-1 6.500 6t7 6" stroke={DK} strokeWidth="1.100" /><Dots at={[[9.5, 10]]} r={1.500} /></g>,
  s_poly: <g fill="none"><path d="M3 13l5-8 5 11 4-7-5 4-9 0" stroke="#8a30c8" strokeWidth="1.200" /><Dots at={[[3, 13], [8, 5], [13, 16], [17, 9]]} r={1.700} /></g>,
  s_int: <g fill="none"><path d="M3 13q7-9 14 0M10 3v14" stroke={DK} strokeWidth="1.100" /><Dots at={[[10, 9]]} r={1.500} /></g>,
  s_cen: <g fill="none"><circle cx="10" cy="10" r="7" stroke="#000" strokeWidth="1.200" /><Dots at={[[10, 10]]} r={1.800} /></g>,
  s_quad: <g fill="none"><circle cx="10" cy="10" r="6" stroke="#777" /><Dots at={[[10, 4], [4, 10], [16, 10], [10, 16]]} r={1.500} /></g>,
  s_point: <g><path d="M10 4v13M4 10.500h13" stroke="#000" strokeWidth="1.100" /><Dots at={[[10, 10.5]]} r={1.700} /></g>,
  s_on: <g><path d="M4 16L16 5" stroke="#000" strokeWidth="1.100" /><Dots at={[[6.5, 14]]} r={1.700} /></g>,
  s_face: <g><path d="M3 6q6-5 14-2-4 6-4 12l-3-2q-3 2-5 2-4-4-2-10z" fill="url(#gb)" stroke="#8aacdc" /><Dots at={[[11, 7]]} r={1.500} /></g>,
  s_grid: <g fill="none" stroke={DK} strokeWidth=".9"><path d="M5 3.500l9 2.500v10l-9-2zM8 4.500v10M11 5v11M5 7l9 2M5 10.500l9 2" /></g>,
};

function Icon({ name }: { name: string }) {
  if (name in SMALL) {
    return (
      <svg width="20" height="20" viewBox="0 0 20 20" className="shrink-0" aria-hidden="true">
        {SMALL[name]}
      </svg>
    );
  }
  return (
    <svg width="24" height="24" viewBox="0 0 24 24" className="shrink-0 overflow-visible" aria-hidden="true">
      {ICONS[name]}
    </svg>
  );
}

// ---- 工具条 ----

// "|" 分隔线  "v" 下拉箭头  "_" 工具条末尾的低位箭头  ":" 拖柄  "»" 溢出
type Item = string | [icon: string, label: string];

const ROW0: Item[] = [
  ["c_purple", "新建"], ["c_olive", "打开"], ["c_navy", "保存"], "|",
  ["c_ring", "剪切"], ["c_box", "复制"], ["c_box", "粘贴"], "|", ["c_tick", "撤销"],
];

const ROW1: Item[] = [
  ["extrude", "拉伸"], ["revolve", "旋转"], ["hole", "孔"], ["emboss", "凸起"], ["tape", "螺纹"], ["pocket", "腔体"], "|",
  ["offsetFace", "偏置面"], ["pattern", "阵列特征"], ["patternGeom", "阵列几何特征"], ["mirror", "镜像特征"], ["unite", "求和"], "v",
  ["trim", "修剪体"], "v", ["trim", "拆分体"], ["trimSheet", "修剪片体"], ["divide", "分割面"], ["shell", "抽壳"], "v",
  ["shell", "加厚"], ["replace", "替换面"], ["offsetBody", "缩放体"], "|",
  ["blend", "边倒圆"], ["faceBlend", "面倒圆"], ["chamfer", "倒斜角"], ["draft", "拔模"], ["facet", "小平面体"], "_", ":",
  ["ruled", "直纹"], ["mesh", "通过曲线网格"], ["sweep", "N 边曲面"], ["swept", "扫掠"], ["curveTool", "曲线工具"], "»20", ":",
  ["deleteBody", "删除体"],
];

const ROW2: Item[] = [
  ["layers", "图层"], ["layerSet", "图层设置"], "|", ["tag", "属性"], "|",
  ["wave1", "更新部件"], ["wave2", "更新装配"], ["wave3", "更新全部"], "|", ["annotate", "注释"], "_", ":",
  ["straighten", "弯边"], "»16", ":",
  ["springV", "圆柱压缩弹簧"], ["springT", "圆柱拉伸弹簧"], ["springD", "碟簧"], "|", ["springX", "删除弹簧"], "_", ":",
  ["triangle", "基准符号"], ["sheet", "表格注释"], ["folderPts", "点集"], ["folderCirc", "圆集"], ["note", "技术要求"], ["paintDim", "格式刷"], "|",
  ["fit", "公差配合"], "_", ":",
  ["lock1", "锁定组件"], ["lock2", "解锁组件"], "_", ":",
  ["line", "直线"], ["arc", "圆弧"], ["spline", "艺术样条"], ["offsetCurve", "偏置曲线"], ["curveFace", "在面上偏置"],
  ["bridge", "桥接曲线"], ["project", "投影曲线"], ["intersect", "相交曲线"],
];

const SKETCH_ROW: Item[] = [
  ["profile", "轮廓"], ["line", "直线"], ["arc", "圆弧"], ["circle", "圆"], ["fillet", "圆角"], ["chamferLine", "倒斜角"],
  ["rect", "矩形"], ["spline", "艺术样条"], ["plus", "点"], ["offsetGray", "偏置曲线"], "v", "|",
  ["quickTrim", "快速修剪"], ["quickExtend", "快速延伸"], ["corner", "制作拐角"], "|", ["autoDim", "快速尺寸"], "v", "|",
  ["constraint", "几何约束"], ["symmetric", "设为对称"], ["showCons", "显示约束"], "v", "|",
  ["orient", "定向到草图"], ["reattach", "重新附着"], ["update", "更新模型"],
];

const ASM_ROW: Item[] = [
  ["asmBlue", "查找组件"], ["asmFrame", "打开组件"], ["addPart", "添加组件"], "v",
  ["movePart", "移动组件"], ["mirrorAsm", "镜像装配"], ["asmCons", "装配约束"], "|",
  ["wrench", "显示自由度"], ["pattern3", "阵列组件"], ["steps", "装配序列"], "|", ["box3d", "产品接口"], "|",
  ["chain", "WAVE 几何链接器"], ["chain2", "部件间链接"], ["infoTree", "关系浏览器"], "|", ["clearance", "间隙分析"], "v", "_",
];

const SEL_ROW: Item[] = [
  ["s_snap", "类型过滤"], "|", ["s_back", "重置过滤器"], ["s_filter", "常规选择"], "v",
  ["s_rot", "全选"], ["s_tree", "选择组件"], "|", ["s_box", "矩形选择"], "v",
  "|", ["s_solid", "着色"], ["s_cube", "高亮面"], "|",
];

const SNAPS: [icon: string, label: string, on: boolean][] = [
  ["s_view", "启用捕捉点", true], ["s_end", "端点", true], ["s_mid", "中点", true], ["s_ctrl", "控制点", false],
  ["s_poly", "极点", true], ["s_int", "交点", false], ["s_cen", "圆弧中心", true], ["s_quad", "象限点", false],
  ["s_point", "现有点", true], ["s_on", "曲线上的点", true], ["s_face", "面上的点", false],
];

function Caret({ low }: { low?: boolean }) {
  return (
    <button aria-label="更多" className={"flex h-6 w-3 shrink-0 justify-center " + (low ? "items-end pb-1" : "items-center")}>
      <svg width="5" height="3" viewBox="0 0 5 3"><path d="M0 0h5L2.500 3z" fill="#000" /></svg>
    </button>
  );
}

function Sep({ className = "h-6" }: { className?: string }) {
  return (
    <div className="flex w-1.5 shrink-0 justify-center">
      <div className={"w-px bg-[#d8d8d8] " + className} />
    </div>
  );
}

function Grip() {
  return (
    <div className="flex w-2.5 shrink-0 self-stretch border-l border-[#dcdcdc] py-1 pl-1">
      <div className="border-l-2 border-dotted border-[#a8a8a8]" />
    </div>
  );
}

function Tools({ items, small }: { items: Item[]; small?: boolean }) {
  return (
    <>
      {items.map((it, i) => {
        if (it === "|") return <Sep key={i} />;
        if (it === "v") return <Caret key={i} />;
        if (it === "_") return <Caret key={i} low />;
        if (it === ":") return <Grip key={i} />;
        if (typeof it === "string") {
          return (
            <button
              key={i}
              aria-label="工具条选项"
              className={"flex h-6 shrink-0 flex-col items-center justify-between pb-1 " + (it === "»20" ? "w-5 pl-2" : "w-4")}
            >
              <svg width="9" height="6" viewBox="0 0 9 6"><path d="M1 0l3 3-3 3M5 0l3 3-3 3" fill="none" stroke="#000" strokeWidth="1.300" /></svg>
              <svg width="5" height="3" viewBox="0 0 5 3"><path d="M0 0h5L2.500 3z" fill="#000" /></svg>
            </button>
          );
        }
        return (
          <button key={i} aria-label={it[1]} className={"flex shrink-0 items-center justify-center " + (small ? "h-6 w-[22px]" : "h-7 w-[31px]")}>
            <Icon name={it[0]} />
          </button>
        );
      })}
    </>
  );
}

function Combo({ label, value, className }: { label: string; value: string; className: string }) {
  return (
    <div className={"relative h-5 shrink-0 " + className}>
      <select aria-label={label} className="block h-5 w-full appearance-none border border-[#a0a0a0] bg-white pl-[3px] text-[11px] leading-4 outline-none">
        <option>{value}</option>
      </select>
      <svg width="8" height="4" viewBox="0 0 8 4" className="pointer-events-none absolute right-1.5 top-2"><path d="M0 0h8L4 4z" fill="#111" /></svg>
    </div>
  );
}

// ---- 部件导航器 ----

const TREE_ICONS: Record<string, ReactNode> = {
  clock: (
    <g>
      <circle cx="8" cy="8" r="7" fill="#dce8f2" stroke="#7c8894" strokeWidth="1.500" />
      <circle cx="8" cy="8" r="5" fill="none" stroke="#7a8894" strokeDasharray="1 1.600" />
      <path d="M8 3v5.500h3.500" fill="none" stroke="#222" strokeWidth="1.300" />
    </g>
  ),
  view: (
    <g fill="none" stroke="#159a5c" strokeWidth="1.300" strokeLinejoin="round">
      <path d="M1 4l6-3 6 3v7l-6 4-6-4zM1 4l6 3 6-3M7 1v14M1 11l6-4 6 4" />
      <path d="M9 15l6-3" stroke="#f04020" strokeWidth="2" />
    </g>
  ),
  camera: (
    <g strokeLinejoin="round">
      <path d="M1 5l9-4 4 1v9l-4 3-8 0z" fill="#f8d8d4" stroke={RD} strokeWidth="1.300" />
      <circle cx="7.500" cy="7" r="3.200" fill="#5a70c8" stroke="#202a60" strokeWidth="1.300" />
      <path d="M11 8h4v4l-3 2" fill="#333" />
    </g>
  ),
  folder: (
    <g stroke="#a87a18" strokeLinejoin="round" strokeWidth=".8">
      <path d="M0 13V4h5l1 2h8v2" fill="#fae888" />
      <path d="M1 14l4-6h11l-3 7H1z" fill="#f4b828" />
    </g>
  ),
  csys: (
    <g fill="none" stroke="#333">
      <path d="M1 1v5l12 7M2 3l5 9M2 6l7-2 1 7M6 8l8-4M7 4v9" />
      <path d="M1 0v3" stroke="#2030e0" strokeWidth="1.500" />
      <path d="M10 5l5-2" stroke="#20a040" strokeWidth="1.500" />
      <path d="M9 12l4 3" stroke={RD} strokeWidth="1.500" />
    </g>
  ),
  sketch: (
    <g fill="#fff" stroke="#111" strokeWidth="1.200">
      <path d="M.600 2.600h5v4h-5zM.600 9.600h3v5h-3zM9 9.600H6.600v5h7v-5" />
      <path d="M7 10l5-7 2 1-5 7-2 1z" fill="#f0b848" stroke="#8a4a10" strokeWidth=".8" />
    </g>
  ),
  extrude: (
    <g stroke="#e05818" strokeLinejoin="round">
      <path d="M1 4q6-4 13-2l1 10-3 2-4-1-3 1-4-1z" fill="#ffcc60" />
      <path d="M1 4l4 1 4-1 3 1 3-3M5 5v9M9 4v9M12 5v9" fill="none" strokeWidth="1.200" />
    </g>
  ),
  plane: <path d="M2.500 1.500l11 3v10l-11-3z" fill="#f8fbf8" stroke="#666" strokeWidth=".9" />,
  revolve: (
    <g strokeLinejoin="round">
      <path d="M1 3q7-3 14 0v5l-4 2-1 4-2 1-2-1-1-4-4-2z" fill="#ffc040" stroke="#d05a18" />
      <path d="M1 3l5 2v9l-1-4-4-2z" fill="#2a5cd8" stroke="#203090" />
      <path d="M8.500 4v11" stroke="#203090" strokeWidth="2" />
      <path d="M6.500 4v9" stroke={RD} />
    </g>
  ),
  unite: (
    <g stroke="#10302c">
      <rect x="2.500" y="6.500" width="8" height="8" fill="#1f9a84" />
      <circle cx="10.500" cy="6.500" r="4" fill="#1f9a84" />
      <path d="M7 6.500v3h3.500" fill="none" />
      <path d="M0 1.500h5M2.500-1v5" stroke={RD} />
    </g>
  ),
};

type TreeNode = { icon: string; text: string; dim?: boolean; bold?: boolean; warn?: boolean };

const FEATURES: TreeNode[] = [
  { icon: "csys", text: "基准坐标系 (0)", dim: true },
  { icon: "sketch", text: '草图 (1) "SKETCH_', dim: true },
  { icon: "sketch", text: '草图 (2) "SKETCH_', dim: true },
  { icon: "extrude", text: "拉伸 (3)", warn: true },
  { icon: "sketch", text: '草图 (4) "SKETCH_', dim: true },
  { icon: "extrude", text: "拉伸 (5)" },
  { icon: "plane", text: "基准平面 (6)", dim: true },
  { icon: "revolve", text: "旋转 (7)" },
  { icon: "unite", text: "求和 (8)" },
  { icon: "plane", text: "基准平面 (9)", dim: true },
  { icon: "extrude", text: "拉伸 (10)", bold: true },
];

function TreeIcon({ name }: { name: string }) {
  return (
    <svg width="16" height="16" viewBox="0 0 16 16" className="shrink-0 overflow-visible" aria-hidden="true">
      {TREE_ICONS[name]}
    </svg>
  );
}

const ROW = "flex h-5 items-center border-b border-[#e6e6e6] even:bg-[#fafafa] whitespace-nowrap overflow-hidden";

function RootRow({ icon, text, checked, plain }: { icon: string; text: string; checked?: boolean; plain?: boolean }) {
  return (
    <li className={ROW}>
      {plain ? (
        <span className="w-[3px]" />
      ) : (
        <span className="flex h-2.5 w-[3px] items-center border border-l-0 border-[#c4c4c4]"><span className="h-px w-px bg-black" /></span>
      )}
      <span className="w-[5px] border-t border-dotted border-[#999]" />
      {checked && (
        <svg width="16" height="14" viewBox="0 0 16 14" className="shrink-0"><path d="M2 7l3-1 2 3 6-8 1 1-6 11H6z" fill="#10b030" stroke="#10b030" /></svg>
      )}
      <TreeIcon name={icon} />
      <span className="pl-[3px]">{text}</span>
    </li>
  );
}

function FeatureRow({ node, last }: { node: TreeNode; last: boolean }) {
  return (
    <li className={ROW}>
      <span className={"ml-[17px] w-px shrink-0 self-start border-l border-dotted border-[#888] " + (last ? "h-2.5" : "h-5")} />
      <span className="w-2 shrink-0 border-t border-dotted border-[#888]" />
      <label className="flex min-w-0 items-center">
        <span className="relative ml-[3px] mr-0.5 size-3 shrink-0">
          <input type="checkbox" defaultChecked className="block size-3 appearance-none border border-black bg-white" />
          <svg width="12" height="12" viewBox="0 0 12 12" className="pointer-events-none absolute inset-0"><path d="M1.500 6L4 5l1 2 5-5 1 1-5 7H4z" fill="#08b828" stroke="#08b828" strokeWidth=".6" /></svg>
          {node.warn && (
            <svg width="11" height="10" viewBox="0 0 11 10" className="absolute -left-0.5 -top-1"><path d="M5.500 0L11 10H0z" fill="#f8e020" stroke="#b89a10" strokeWidth=".6" /><path d="M5.500 3v3.500M5.500 7.500v1.200" stroke="#222" strokeWidth="1.200" /></svg>
          )}
        </span>
        <TreeIcon name={node.icon} />
        <span className={"pl-[3px] " + (node.dim ? "text-[#9c9c9c]" : node.bold ? "font-bold" : "")}>{node.text}</span>
      </label>
    </li>
  );
}

function Navigator() {
  return (
    <aside className="flex w-[177px] shrink-0 flex-col border-r border-[#7c848c] pr-2.5">
      <div className="flex h-[29px] shrink-0 items-center justify-between pr-1.5">
        <h2 className="-ml-[9px] whitespace-nowrap">部件导航器</h2>
        <button aria-label="最大化" className="h-[11px] w-3 border border-t-2 border-black" />
      </div>
      <div className="flex min-h-0 flex-1 flex-col border-r border-t border-[#d0d0d0] pr-px">
        <div className="flex h-[21px] shrink-0 items-center gap-[18px] border-b border-[#c8c8c8] bg-[#f0f0f0]">
          <span className="-ml-[5px]">名称</span>
          <svg width="9" height="5" viewBox="0 0 9 5"><path d="M0 5h9L4.500 0z" fill="#111" /></svg>
        </div>
        <ul className="min-h-0 flex-1 overflow-hidden">
          <RootRow icon="clock" text="历史记录模式" plain />
          <RootRow icon="view" text="模型视图" />
          <RootRow icon="camera" text="摄像机" checked />
          <RootRow icon="folder" text="模型历史记录" />
          {FEATURES.map((n, i) => (
            <FeatureRow key={n.text} node={n} last={i === FEATURES.length - 1} />
          ))}
          <li className={ROW} />
          <li className={ROW} />
          <li className={ROW} />
        </ul>
        <div className="mb-0.5 flex h-4 shrink-0 items-center justify-between bg-[#f0f0f0] pl-1.5 pr-1">
          <div className="h-full w-[51px] bg-[#cdcdcd]" />
          <svg width="6" height="8" viewBox="0 0 6 8"><path d="M1 0.500l4 3.500-4 3.500" fill="none" stroke="#333" strokeWidth="1.600" /></svg>
        </div>
      </div>
      <div className="mb-1.5 h-[5px] shrink-0 border-y border-[#a8a8a8] bg-[#d8d8d8]" />
    </aside>
  );
}

// ---- 图形窗口 ----

function Model() {
  return (
    <svg width="90" height="180" viewBox="0 0 270 540" className="absolute left-[333px] top-[101px]" role="img" aria-label="实体模型">
      <g stroke="#33250c" strokeWidth="3" strokeLinejoin="round">
        <path d="M77 294L62 478q6 20 58 24 40 2 45-10L209 317z" fill="url(#body)" />
        <ellipse cx="143" cy="305" rx="67" ry="22" transform="rotate(9 143 305)" fill="#f7b402" />
        <path d="M142 124L112 302q6 14 34 16 20 1 26-6L198 130z" fill="url(#shaft)" stroke="none" />
        <path d="M112 302q6 14 34 16 20 1 26-6M142 124L112 302M198 130L172 312" fill="none" strokeWidth="1.500" />
        <path d="M152 44l-9 80q16 10 54 7 8-4 8-12l8-74-27 12z" fill="#c27604" />
        <path d="M154 42l22-7 37 9-3 8-24 6-28-8z" fill="#ffbc05" />
        <path d="M186 58l-10 70M191 58l-10 70" strokeWidth="2" />
        <circle cx="136" cy="434" r="30" fill="url(#hole)" strokeWidth="2.500" />
      </g>
      <path d="M110 424q4-14 24-17 4 5 3 9-14 3-20 9z" fill="#dfe2e5" stroke="#555" strokeWidth="1.500" />
    </svg>
  );
}

function Triad() {
  return (
    <svg width="44" height="56" viewBox="0 0 44 56" className="absolute bottom-[25px] left-9 overflow-visible" role="img" aria-label="视图三重轴">
      <g fill="#c8cbce" fillOpacity=".7" stroke="#a4a7aa" strokeLinejoin="round">
        <path d="M9 20l8-5 14 5-1 14-8 5-13-5z" />
        <path d="M9 20l14 4 8-4M23 24l-1 15" fill="none" />
      </g>
      <path d="M8 33l18-8" stroke="#8cc08c" />
      <path d="M7 34L9 12" stroke="#1030d0" strokeWidth="2" />
      <path d="M7 17l2.500-8 2 8z" fill="#1030d0" />
      <path d="M8 36l16 5" stroke="#d02020" strokeWidth="2" />
      <path d="M20 38.500l9 4.500-9-.500z" fill="#d02020" stroke="#d02020" />
      <circle cx="5" cy="35" r="4" fill="url(#gg)" stroke="#a0a0a0" strokeWidth=".5" />
      <g fontSize="11" fontFamily="Open Sans, sans-serif">
        <text x="7" y="9" fill="#1040f0">Z</text>
        <text x="30" y="50" fill="#e02828">X</text>
      </g>
    </svg>
  );
}

export default function App() {
  return (
    <div className="flex h-screen flex-col overflow-hidden bg-white font-['Open_Sans','Noto_Sans_CJK_SC',sans-serif] text-xs text-[#1a1a1a]">
      <Defs />

      {/* 标准工具条，只露出底边 */}
      <div className="flex h-[9px] shrink-0 items-start overflow-hidden border-b border-[#dcdcdc] pl-[22px]">
        <div className="flex items-start [&>button]:h-2 [&>button]:items-start">
          <Tools items={ROW0} />
          <div className="w-[43px]" />
          <Sep className="h-1" />
          <Tools items={[["c_navy", "窗口"]]} />
          <div className="w-3" />
          <Sep className="h-1" />
          <Tools items={[["c_blue", "命令查找器"]]} />
          <Sep className="h-1" />
          <div className="mx-1 h-0.5 w-[124px] border-x border-b border-[#a0a0a0]" />
          <div className="w-4" />
          <Grip />
          <Tools items={[["c_purple", "适合窗口"]]} />
          <div className="w-2" />
          <Tools items={[["c_dark", "缩放"]]} />
          <div className="w-4" />
          <Tools items={[["c_blue", "着色"]]} />
          <div className="w-2.5" />
          <Tools items={[["c_box", "线框"], ["c_blue", "剖切"]]} />
          <div className="w-3" />
          <Tools items={[["c_win", "背景"]]} />
          <div className="w-3" />
          <Sep className="h-1" />
          <Tools items={[["c_dark", "测量距离"], ["c_dark", "测量角度"]]} />
          <div className="w-3" />
          <Grip />
          <Tools items={[["c_card", "复制面"], ["c_card", "粘贴面"], ["c_ring", "删除面"]]} />
        </div>
      </div>

      {/* 特征工具条 */}
      <div className="-ml-px flex h-[34px] shrink-0 items-center overflow-hidden border-b border-[#dcdcdc]">
        <Tools items={ROW1} />
      </div>

      {/* 实用工具、弹簧、曲线 */}
      <div className="-ml-[13px] flex h-[34px] shrink-0 items-center overflow-hidden border-b border-[#dcdcdc]">
        <Tools items={ROW2} />
      </div>

      {/* 选择条 */}
      <div className="flex h-8 shrink-0 items-center overflow-hidden border-b-2 border-[#8a9098] pt-0.5">
        <Combo label="类型过滤器" value="择过滤器" className="-ml-[14px] mr-[7px] w-[101px]" />
        <Combo label="选择范围" value="整个装配" className="mr-1 w-[140px]" />
        <Tools small items={SEL_ROW} />
        <div className="ml-1 flex">
          {SNAPS.map(([icon, label, on]) => (
            <button
              key={icon}
              aria-label={label}
              aria-pressed={on}
              className={
                "flex h-[23px] w-[23px] shrink-0 items-center justify-center " +
                (on ? "border border-[#a4b8b4] bg-[#c8d8d6]" : "")
              }
            >
              <Icon name={icon} />
            </button>
          ))}
        </div>
        <Tools small items={["|", ["s_grid", "栅格"]]} />
      </div>

      <div className="flex min-h-0 flex-1">
        <Navigator />
        <main className="relative flex-1 bg-linear-to-b from-[#b3b5b7] via-[#cfd1d3] to-[#e7e8ea]">
          <Model />
          <Triad />
        </main>
      </div>

      {/* 草图工具条 */}
      <div className="flex h-[34px] shrink-0 items-center overflow-hidden border-b border-[#e4e4e4] pl-[232px]">
        <Grip />
        <button aria-label="草图" className="mr-1.5 flex h-7 w-[26px] shrink-0 items-center justify-center"><Icon name="sketch" /></button>
        <button className="mr-1 flex h-6 shrink-0 items-center gap-1 text-[11px] text-[#b0b0b0]">
          <span className="flex size-6 items-center justify-center border border-[#bbb] bg-[#dadada]"><Icon name="flag" /></span>
          完成草图
        </button>
        <Tools items={SKETCH_ROW} />
      </div>

      {/* 装配工具条 */}
      <div className="flex h-[34px] shrink-0 items-center border-b border-[#a8a8a8]">
        <div className="flex h-full items-center border-r border-[#dcdcdc] pr-0.5">
          <Tools items={ASM_ROW} />
        </div>
      </div>

      {/* 状态行 */}
      <footer className="flex h-[14px] shrink-0 items-start overflow-hidden text-[11px] font-bold leading-[18px]">
        <p className="-ml-[4px] w-[447px] shrink-0 whitespace-nowrap">并使用 MB3，或者双击某一对象</p>
        <p className="flex-1 whitespace-nowrap">部件文件已保存</p>
        <div className="flex gap-1 pr-8 pt-[3px]">
          <svg width="16" height="12" viewBox="0 0 16 12"><path d="M.5.5h15V12H.5z" fill="#ddd" stroke="#bbb" /><path d="M2 3q4-2 6 1t6-1l-3 6q-3 2-5-1l-1 4z" fill="#eee" stroke="#777" strokeDasharray="2 1" /></svg>
          <svg width="16" height="12" viewBox="0 0 16 12"><path d="M1 4V1h3M12 1h3v3" fill="none" stroke="#555" /><path d="M3.500 3.500h9V12h-9z" fill="#5a94e0" stroke="#333" /><path d="M3 3h10v2H3z" fill="#333" /></svg>
        </div>
      </footer>
    </div>
  );
}
